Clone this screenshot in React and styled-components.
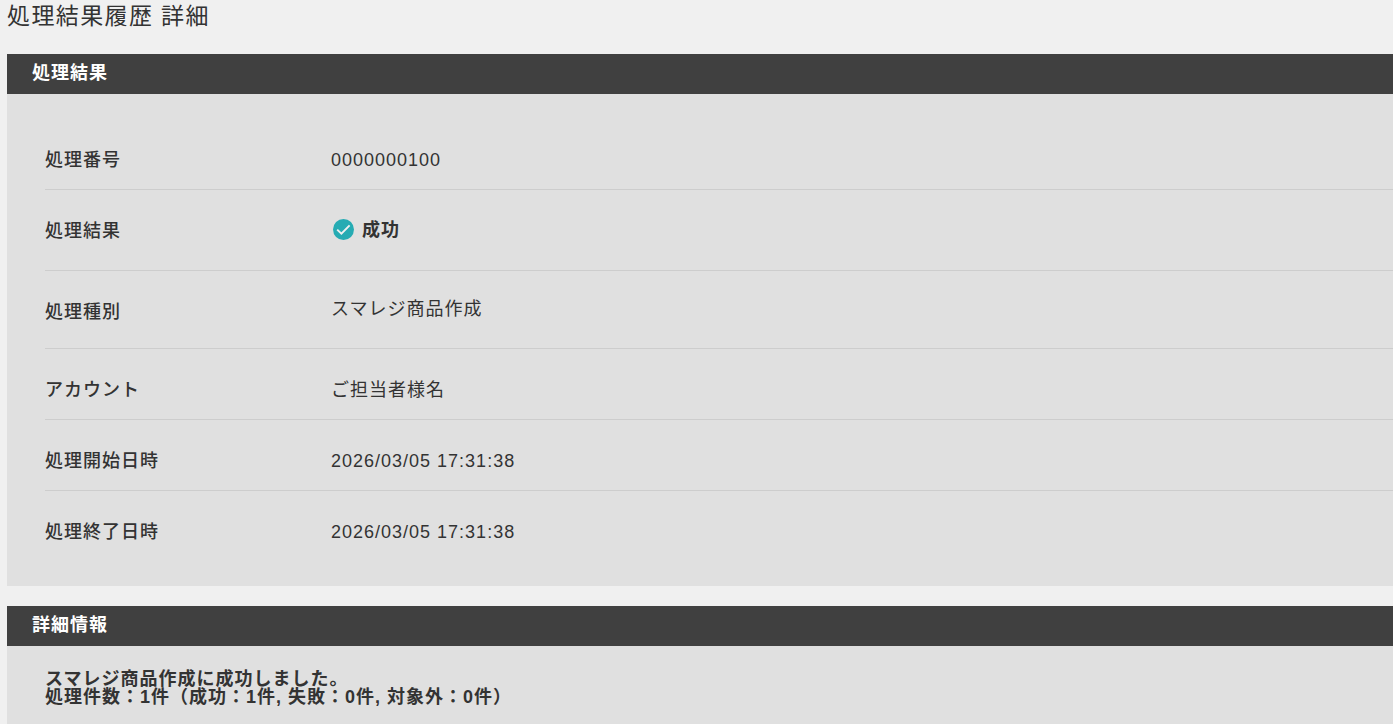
import React from "react";
import styled, { createGlobalStyle } from "styled-components";

const GlobalStyle = createGlobalStyle`
  body {
    margin: 0;
    background: #f0f0f0;
    color: #333;
    font-family: "Liberation Sans", "Noto Sans CJK JP", sans-serif;
    font-size: 18px;
    letter-spacing: 1px;
  }
`;

const Page = styled.main`
  padding-left: 7px;
`;

const PageTitle = styled.h1`
  margin: 0 0 22px;
  font-size: 23px;
  font-weight: 400;
  letter-spacing: 0.06em;
  line-height: 32px;
`;

const Panel = styled.section`
  margin-bottom: 20px;
  background: #e0e0e0;
`;

const PanelTitle = styled.h2`
  margin: 0;
  padding: 9px 25px 11px;
  background: #404040;
  color: #fff;
  font-size: 18px;
  font-weight: 700;
  line-height: 20px;
`;

const DetailList = styled.dl`
  margin: 0;
  padding: 25px 0 24px 38px;
`;

const Row = styled.div`
  display: grid;
  grid-template-columns: 286px 1fr;
  align-items: start;
  min-height: ${(props) => props.$height || 71}px;
  padding-top: 29px;
  box-sizing: border-box;
  border-bottom: 1px solid #cdcdcd;

  &:last-child {
    border-bottom: none;
  }
`;

const Label = styled.dt`
  padding-top: 2px;
  font-weight: 500;
  line-height: 20px;
`;

const Value = styled.dd`
  margin: 0;
  padding-top: ${(props) => (props.$raised ? 0 : 2)}px;
  line-height: ${(props) => (props.$raised ? 18 : 20)}px;
`;

const Status = styled.strong`
  display: flex;
  align-items: center;
  gap: 8px;
  padding-left: 2px;
  font-weight: 700;
`;

const Message = styled.p`
  margin: 0;
  padding: 24px 38px;
  font-weight: 700;
  line-height: 18px;
`;

const SuccessIcon = () => (
  <svg width="21" height="21" viewBox="0 0 21 21" aria-hidden="true">
    <circle cx="10.5" cy="10.5" r="10.5" fill="#26abb3" />
    <path
      d="M4.2 10.6l4.2 4.1 8.2-8.4"
      fill="none"
      stroke="#f0f0f0"
      strokeWidth="1.9"
    />
  </svg>
);

const rows = [
  { label: "処理番号", value: "0000000100" },
  { label: "処理結果", status: "成功", height: 81, raised: true },
  { label: "処理種別", value: "スマレジ商品作成", height: 78, raised: true },
  { label: "アカウント", value: "ご担当者様名" },
  { label: "処理開始日時", value: "2026/03/05 17:31:38" },
  { label: "処理終了日時", value: "2026/03/05 17:31:38" },
];

const App = () => {
  return (
    <Page lang="ja">
      <GlobalStyle />
      <PageTitle>処理結果履歴 詳細</PageTitle>
      <Panel>
        <PanelTitle>処理結果</PanelTitle>
        <DetailList>
          {rows.map((row) => (
            <Row key={row.label} $height={row.height}>
              <Label>{row.label}</Label>
              <Value $raised={row.raised}>
                {row.status ? (
                  <Status>
                    <SuccessIcon />
                    {row.status}
                  </Status>
                ) : (
                  row.value
                )}
              </Value>
            </Row>
          ))}
        </DetailList>
      </Panel>
      <Panel>
        <PanelTitle>詳細情報</PanelTitle>
        <Message>
          スマレジ商品作成に成功しました。
          <br />
          処理件数：1件（成功：1件, 失敗：0件, 対象外：0件）
        </Message>
      </Panel>
    </Page>
  );
};

export default App;
